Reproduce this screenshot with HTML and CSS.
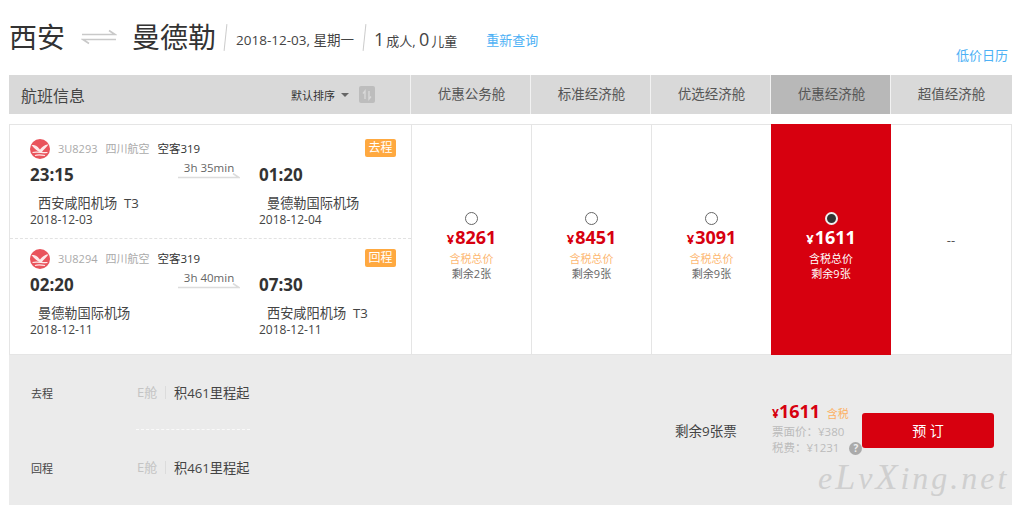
FILE: index.html
```html
<!DOCTYPE html>
<html lang="zh-CN">
<head>
    <meta charset="UTF-8">
    <title>航班信息</title>
    <link rel="stylesheet" href="styles.css">
</head>
<body>
    <div class="page">
        <div class="search-bar">
            <span class="city">西安</span>
            <svg class="swap" width="36" height="16" viewBox="0 0 36 16">
                <path d="M1 5.500H34L28 1.500M35 10.500H2L8 14.500" fill="none" stroke="#c9c9c9" stroke-width="1.600"/>
            </svg>
            <span class="city">曼德勒</span>
            <span class="slash"></span>
            <span class="date">2018-12-03, 星期一</span>
            <span class="slash slash-b"></span>
            <span class="people"><b>1</b>成人, <b>0</b>儿童</span>
            <a class="requery">重新查询</a>
        </div>
        <div class="calendar-row"><a class="calendar">低价日历</a></div>

        <div class="table-head">
            <div class="head-info">
                <span class="head-title">航班信息</span>
                <span class="sort">默认排序</span>
                <span class="caret"></span>
                <span class="sort-btn">
                    <svg width="16" height="16" viewBox="0 0 16 16"><path d="M6 12V4L4 6.500M10 4V12L12 9.500" fill="none" stroke="#d8d8d8" stroke-width="1.400"/></svg>
                </span>
            </div>
            <div class="head-cell">优惠公务舱</div>
            <div class="head-cell">标准经济舱</div>
            <div class="head-cell">优选经济舱</div>
            <div class="head-cell head-active">优惠经济舱</div>
            <div class="head-cell">超值经济舱</div>
        </div>

        <div class="result-row">
            <div class="flights">
                <div class="leg leg-first">
                    <div class="leg-top">
                        <svg class="logo" width="20" height="20" viewBox="0 0 20 20">
                            <circle cx="10" cy="10" r="10" fill="#e9545c"/>
                            <path d="M1.500 6C6 5.500 8 8 10 10.500C12 8 15 5 18.500 5.500C16 8.500 13.500 11 11.500 13.500C8 13 4.500 10 1.500 6Z" fill="#fdeaea"/>
                            <path d="M2.500 13.500C7 12.500 13 14 17.500 13.500M5 16.500C8 15.500 12 16 15 16.500" fill="none" stroke="#fdeaea" stroke-width="1.200"/>
                        </svg>
                        <span class="flight-no">3U8293</span>
                        <span class="airline">四川航空</span>
                        <span class="plane">空客319</span>
                        <span class="tag">去程</span>
                    </div>
                    <div class="leg-body">
                        <div class="stop">
                            <div class="time">23:15</div>
                            <div class="airport">西安咸阳机场&nbsp; T3</div>
                            <div class="day">2018-12-03</div>
                        </div>
                        <div class="duration">
                            <span>3h 35min</span>
                            <svg width="62" height="6" viewBox="0 0 62 6"><path d="M0 4.500H61L55 .5" fill="none" stroke="#dcdcdc" stroke-width="1.600"/></svg>
                        </div>
                        <div class="stop">
                            <div class="time">01:20</div>
                            <div class="airport">曼德勒国际机场</div>
                            <div class="day">2018-12-04</div>
                        </div>
                    </div>
                </div>
                <div class="leg">
                    <div class="leg-top">
                        <svg class="logo" width="20" height="20" viewBox="0 0 20 20">
                            <circle cx="10" cy="10" r="10" fill="#e9545c"/>
                            <path d="M1.500 6C6 5.500 8 8 10 10.500C12 8 15 5 18.500 5.500C16 8.500 13.500 11 11.500 13.500C8 13 4.500 10 1.500 6Z" fill="#fdeaea"/>
                            <path d="M2.500 13.500C7 12.500 13 14 17.500 13.500M5 16.500C8 15.500 12 16 15 16.500" fill="none" stroke="#fdeaea" stroke-width="1.200"/>
                        </svg>
                        <span class="flight-no">3U8294</span>
                        <span class="airline">四川航空</span>
                        <span class="plane">空客319</span>
                        <span class="tag">回程</span>
                    </div>
                    <div class="leg-body">
                        <div class="stop">
                            <div class="time">02:20</div>
                            <div class="airport">曼德勒国际机场</div>
                            <div class="day">2018-12-11</div>
                        </div>
                        <div class="duration">
                            <span>3h 40min</span>
                            <svg width="62" height="6" viewBox="0 0 62 6"><path d="M0 4.500H61L55 .5" fill="none" stroke="#dcdcdc" stroke-width="1.600"/></svg>
                        </div>
                        <div class="stop">
                            <div class="time">07:30</div>
                            <div class="airport">西安咸阳机场&nbsp; T3</div>
                            <div class="day">2018-12-11</div>
                        </div>
                    </div>
                </div>
            </div>

            <div class="fare">
                <span class="radio"></span>
                <div class="price"><small>¥</small>8261</div>
                <div class="tax">含税总价</div>
                <div class="left">剩余2张</div>
            </div>
            <div class="fare">
                <span class="radio"></span>
                <div class="price"><small>¥</small>8451</div>
                <div class="tax">含税总价</div>
                <div class="left">剩余9张</div>
            </div>
            <div class="fare">
                <span class="radio"></span>
                <div class="price"><small>¥</small>3091</div>
                <div class="tax">含税总价</div>
                <div class="left">剩余9张</div>
            </div>
            <div class="fare fare-active">
                <span class="radio"></span>
                <div class="price"><small>¥</small>1611</div>
                <div class="tax">含税总价</div>
                <div class="left">剩余9张</div>
            </div>
            <div class="fare-none">--</div>
        </div>

        <div class="detail">
            <div class="detail-legs">
                <div class="detail-leg detail-leg-first">
                    <span class="detail-name">去程</span>
                    <span class="cabin">E舱</span>
                    <span class="miles">积461里程起</span>
                </div>
                <div class="detail-leg">
                    <span class="detail-name">回程</span>
                    <span class="cabin">E舱</span>
                    <span class="miles">积461里程起</span>
                </div>
            </div>
            <div class="tickets-left">剩余9张票</div>
            <div class="summary">
                <div class="sum-price"><small>¥</small>1611 <span>含税</span></div>
                <div class="sum-line">票面价：¥380</div>
                <div class="sum-line">税费：¥1231<i class="help">?</i></div>
            </div>
            <button class="book">预 订</button>
        </div>
        <div class="watermark">e<span>L</span>v<span>X</span>ing.net</div>
    </div>
</body>
</html>
```

FILE: styles.css
```css
body {
    margin: 0;
    background-color: #fff;
    font-family: "Open Sans", "Noto Sans CJK SC", sans-serif;
    color: #333;
}
a {
    color: #4db1f5;
}
.page {
    position: relative;
    width: 1003px;
    height: 513px;
    margin-left: 9px;
    overflow: hidden;
}

/* top search line */
.search-bar {
    display: flex;
    align-items: center;
    height: 36px;
    padding-top: 19px;
    white-space: nowrap;
}
.city {
    font-size: 28px;
    line-height: 36px;
    color: #333;
}
.swap {
    margin: 0 15px 0 16px;
}
.slash {
    width: 1px;
    height: 27px;
    margin: 0 10px 0 9px;
    background-color: #ccc;
    transform: rotate(6deg);
}
.slash-b {
    margin-left: 10px;
    margin-right: 9px;
}
.date {
    font-size: 13.5px;
    color: #444;
    margin-top: 4px;
}
.people {
    font-size: 13px;
    color: #444;
    margin-top: 4px;
}
.people b {
    font-weight: 400;
    font-size: 18px;
    margin-right: 2px;
}
.requery {
    font-size: 13px;
    margin-left: 29px;
    margin-top: 4px;
}
.calendar-row {
    display: flex;
    justify-content: flex-end;
    padding-right: 4px;
    height: 20px;
    line-height: 20px;
    margin-top: -10px;
}
.calendar {
    font-size: 13px;
}

/* table head */
.table-head {
    display: flex;
    height: 39px;
    margin-top: 10px;
    background-color: #d9d9d9;
}
.head-info {
    display: flex;
    align-items: center;
    width: 401px;
    flex: none;
    padding-left: 12px;
    box-sizing: border-box;
}
.head-title {
    font-size: 16px;
    color: #444;
    width: 270px;
}
.sort {
    font-size: 11px;
    color: #333;
}
.caret {
    width: 0;
    height: 0;
    margin: 0 10px 0 6px;
    border: 4px solid transparent;
    border-top: 4px solid #666;
    border-bottom: 0;
}
.sort-btn {
    display: flex;
    align-items: center;
    justify-content: center;
    width: 16px;
    height: 17px;
    border-radius: 2px;
    background-color: #bdbdbd;
}
.head-cell {
    width: 120px;
    flex: none;
    box-sizing: border-box;
    border-left: 1px solid #f2f2f2;
    padding-left: 2px;
    font-size: 13.5px;
    line-height: 39px;
    text-align: center;
    color: #555;
}
.head-active {
    background-color: #b8b8b8;
}

/* flight row */
.result-row {
    display: flex;
    height: 231px;
    margin-top: 10px;
    box-sizing: border-box;
    border: 1px solid #e5e5e5;
    width: 1003px;
}
.flights {
    width: 401px;
    flex: none;
}
.leg {
    height: 115px;
    box-sizing: border-box;
    padding: 10px 15px 0 20px;
}
.leg-first {
    height: 114px;
    padding-top: 14px;
    border-bottom: 1px dashed #e2e2e2;
}
.leg-top {
    display: flex;
    height: 20px;
    line-height: 20px;
    font-size: 11px;
}
.logo {
    margin-right: 8px;
}
.flight-no {
    color: #aaa;
    margin-right: 8px;
}
.airline {
    color: #aaa;
    margin-right: 8px;
}
.plane {
    font-size: 11.5px;
    color: #333;
}
.tag {
    width: 31px;
    height: 18px;
    margin-left: auto;
    line-height: 18px;
    text-align: center;
    border-radius: 2px;
    font-size: 12px;
    color: #fff;
    background-color: #ffa940;
}
.leg-body {
    display: flex;
}
.stop {
    width: 148px;
}
.stop + .duration + .stop {
    width: 130px;
}
.time {
    margin-top: 5px;
    font-size: 17px;
    font-weight: 700;
    line-height: 22px;
    color: #333;
}
.airport {
    margin-top: 8px;
    padding-left: 8px;
    font-size: 13.2px;
    line-height: 18px;
    color: #444;
}
.day {
    font-size: 12px;
    line-height: 16px;
    color: #444;
}
.duration {
    display: flex;
    flex-direction: column;
    align-items: center;
    width: 62px;
    margin: 2px 19px 0 0;
    font-size: 11.5px;
    line-height: 14px;
    color: #666;
}
.duration svg {
    margin-top: -2px;
}

/* fare columns */
.fare {
    display: flex;
    flex-direction: column;
    align-items: center;
    width: 120px;
    flex: none;
    box-sizing: border-box;
    border-left: 1px solid #e5e5e5;
    padding-top: 87px;
}
.radio {
    width: 11px;
    height: 11px;
    border: 1px solid #666;
    border-radius: 50%;
    background-color: #fff;
}
.price {
    font-size: 18px;
    font-weight: 700;
    line-height: 24px;
    color: #d7000f;
}
.price small {
    font-size: 13px;
    margin-right: 1px;
}
.tax {
    font-size: 11px;
    line-height: 15px;
    color: #fdb873;
}
.left {
    font-size: 11px;
    line-height: 15px;
    color: #666;
}
.fare-active {
    background-color: #d7000f;
    border-left: 0;
    margin-top: -1px;
    margin-bottom: -1px;
    padding-top: 88px;
}
.fare-active .radio {
    background-color: #333;
    border: 2px solid #eee;
    width: 9px;
    height: 9px;
}
.fare-active .price,
.fare-active .tax,
.fare-active .left {
    color: #fff;
}
.fare-none {
    flex: 1;
    line-height: 230px;
    text-align: center;
    font-size: 13px;
    color: #555;
}

/* bottom detail panel */
.detail {
    display: flex;
    align-items: center;
    height: 150px;
    background-color: #ebebeb;
    width: 1003px;
}
.detail-legs {
    width: 666px;
    flex: none;
    padding-left: 22px;
    box-sizing: border-box;
}
.detail-leg {
    display: flex;
    align-items: center;
    height: 20px;
    position: relative;
}
.detail-leg-first {
    margin-bottom: 55px;
}
.detail-leg-first::after {
    content: "";
    position: absolute;
    left: 105px;
    top: 46px;
    width: 114px;
    border-top: 1px dashed #fafafa;
}
.detail-name {
    width: 106px;
    font-size: 11px;
    color: #444;
}
.cabin {
    width: 29px;
    color: #c4c4c4;
    font-size: 13px;
    box-sizing: border-box;
    border-right: 1px solid #dcdcdc;
    line-height: 13px;
    margin-right: 8px;
}
.miles {
    color: #444;
    font-size: 13.2px;
}
.tickets-left {
    width: 97px;
    font-size: 13.5px;
    color: #444;
    flex: none;
}
.summary {
    width: 90px;
    flex: none;
    padding-bottom: 3px;
}
.sum-price {
    font-size: 18px;
    font-weight: 700;
    line-height: 20px;
    white-space: nowrap;
    color: #d7000f;
}
.sum-price small {
    font-size: 12px;
}
.sum-price span {
    margin-left: 2px;
    font-size: 11px;
    font-weight: 400;
    color: #fdb05f;
}
.sum-line {
    font-size: 11.5px;
    line-height: 16px;
    color: #bbb;
    white-space: nowrap;
}
.help {
    display: inline-block;
    width: 13px;
    height: 13px;
    margin-left: 10px;
    line-height: 13px;
    border-radius: 50%;
    text-align: center;
    font-size: 10px;
    font-style: normal;
    font-weight: 700;
    color: #eee;
    background-color: #aaa;
}
.book {
    width: 132px;
    height: 35px;
    border: 0;
    border-radius: 3px;
    font-family: inherit;
    font-size: 14px;
    color: #fff;
    background-color: #d7000f;
}

/* watermark sits on top of the panel */
.watermark {
    position: absolute;
    left: 809px;
    top: 459px;
    font-family: "Liberation Serif", serif;
    font-style: italic;
    font-size: 32px;
    line-height: 36px;
    letter-spacing: 3px;
    white-space: nowrap;
    color: #cfcfcf;
}
.watermark span {
    font-size: 36px;
}
```
